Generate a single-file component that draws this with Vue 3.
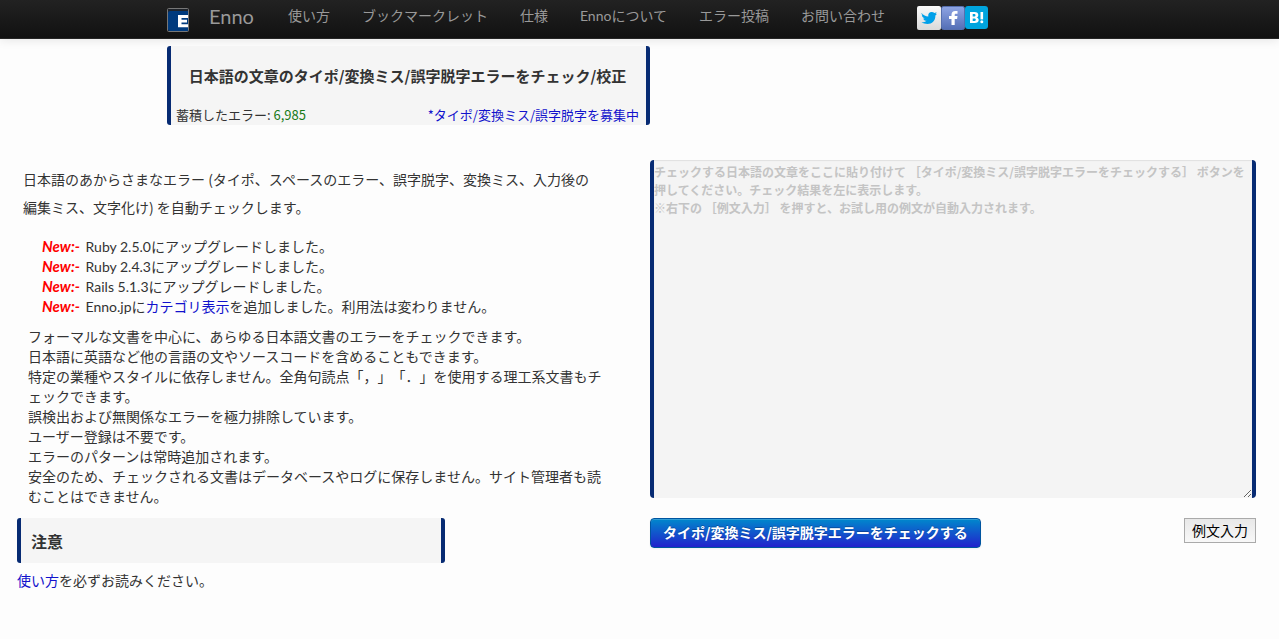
<script setup>
import { ref } from 'vue'

const nav = ['使い方', 'ブックマークレット', '仕様', 'Ennoについて', 'エラー投稿', 'お問い合わせ']
const features = [
  'フォーマルな文書を中心に、あらゆる日本語文書のエラーをチェックできます。',
  '日本語に英語など他の言語の文やソースコードを含めることもできます。',
  '特定の業種やスタイルに依存しません。全角句読点「，」「．」を使用する理工系文書もチェックできます。',
  '誤検出および無関係なエラーを極力排除しています。',
  'ユーザー登録は不要です。',
  'エラーのパターンは常時追加されます。',
  '安全のため、チェックされる文書はデータベースやログに保存しません。サイト管理者も読むことはできません。',
]
const placeholder =
  'チェックする日本語の文章をここに貼り付けて ［タイポ/変換ミス/誤字脱字エラーをチェックする］ ボタンを押してください。チェック結果を左に表示します。\n※右下の ［例文入力］ を押すと、お試し用の例文が自動入力されます。'
const text = ref('')
</script>

<template>
  <div class="page">
    <header class="navbar">
      <nav class="container bar">
        <a class="logo" href="#" aria-label="Enno ホーム">
          <svg width="22" height="24" viewBox="0 0 22 24">
            <rect x=".5" y=".5" width="21" height="23" rx="1" fill="#20242a" stroke="#777" />
            <path d="M1 5q0-2 2-2h18v20H3q-2 0-2-2z" fill="#003a7d" />
            <path d="M11 7h10v3h-6.500v1.800H20v2.700h-5.500v1.800H21v2.900H11z" fill="#fff" />
          </svg>
        </a>
        <a class="brand" href="#">Enno</a>
        <a v-for="item in nav" :key="item" class="item" href="#">{{ item }}</a>
        <div class="social">
          <a href="#" aria-label="Twitter">
            <svg width="24" height="24" viewBox="0 0 24 24">
              <defs><linearGradient id="tw" x2="0" y2="1"><stop stop-color="#fafafa" /><stop offset="1" stop-color="#d9d9d9" /></linearGradient></defs>
              <rect width="24" height="24" rx="2" fill="url(#tw)" />
              <path d="M4.500 7c2 2.300 4 3.400 6.800 3.600C10.800 8 12.300 6 14.700 6c1.100 0 2 .4 2.700 1.100l2.300-.9-1.200 1.900 1.600-.3-1.700 1.700C18.400 15 15 18 10.500 18c-2.200 0-4.300-.6-6-1.700 2 .1 3.600-.4 5-1.500-1.700-.1-2.800-1-3.300-2.400h1.500C5.900 11.800 5 10.700 4.900 9l1.300.3C4.600 8.500 4.300 7.900 4.500 7z" fill="#00a0e9" />
            </svg>
          </a>
          <a href="#" aria-label="Facebook">
            <svg width="24" height="24" viewBox="0 0 24 24">
              <defs><linearGradient id="fb" x2="0" y2="1"><stop stop-color="#8fa5e4" /><stop offset="1" stop-color="#536eb5" /></linearGradient></defs>
              <rect x=".5" y=".5" width="23" height="23" rx="2" fill="url(#fb)" stroke="#566fae" />
              <path d="M10.500 19v-6H8v-3h2.500V8.800C10.500 6.500 11.800 5 14.200 5h2.300v2.800h-1.600c-.9 0-1.200.4-1.200 1.200v1h2.800l-.4 3h-2.400v6z" fill="#fff" />
            </svg>
          </a>
          <a href="#" aria-label="はてなブックマーク">
            <svg width="23" height="24" viewBox="0 0 23 24">
              <rect width="23" height="23" rx="3" fill="#00a4de" />
              <path fill-rule="evenodd" d="M5 6h4.500c2.500 0 3.800 1 3.800 2.900 0 1.300-.7 2.200-1.900 2.500 1.500.3 2.300 1.200 2.300 2.600 0 2-1.500 3-4 3H5zM7.700 8v2.500h1.200c1.100 0 1.600-.4 1.600-1.300S10 8 8.900 8zM7.700 12.500v2.600h1.400c1.100 0 1.700-.4 1.700-1.300s-.6-1.300-1.700-1.300z" fill="#fff" />
              <path d="M15.500 6h2.600v7.400h-2.600z" fill="#fff" /><circle cx="16.800" cy="15.700" r="1.500" fill="#fff" />
            </svg>
          </a>
        </div>
      </nav>
    </header>

    <div class="container">
      <section class="panel hero">
        <h1>日本語の文章のタイポ/変換ミス/誤字脱字エラーをチェック/校正</h1>
        <div class="stats">
          <span>蓄積したエラー: <span class="count">6,985</span></span>
          <a href="#">*タイポ/変換ミス/誤字脱字を募集中</a>
        </div>
      </section>
    </div>

    <main class="columns">
      <section>
        <p class="intro">日本語のあからさまなエラー (タイポ、スペースのエラー、誤字脱字、変換ミス、入力後の編集ミス、文字化け) を自動チェックします。</p>
        <ul class="news">
          <li><em>New:-</em> Ruby 2.5.0にアップグレードしました。</li>
          <li><em>New:-</em> Ruby 2.4.3にアップグレードしました。</li>
          <li><em>New:-</em> Rails 5.1.3にアップグレードしました。</li>
          <li><em>New:-</em> Enno.jpに<a href="#">カテゴリ表示</a>を追加しました。利用法は変わりません。</li>
        </ul>
        <ul class="features">
          <li v-for="f in features" :key="f">{{ f }}</li>
        </ul>
        <div class="panel notice"><h2>注意</h2></div>
        <p class="read"><a href="#">使い方</a>を必ずお読みください。</p>
      </section>
      <form class="editor" @submit.prevent>
        <textarea v-model="text" aria-label="チェックする文章" :placeholder="placeholder"></textarea>
        <div class="actions">
          <button class="check" type="submit">タイポ/変換ミス/誤字脱字エラーをチェックする</button>
          <button class="sample" type="button">例文入力</button>
        </div>
      </form>
    </main>
  </div>
</template>

<style>
body {
  background: #fdfdfd;
}
</style>

<style scoped>
.page {
  font-family: "Noto Sans CJK JP", sans-serif;
  font-size: 14px;
  line-height: 20px;
  color: #333;
  text-spacing-trim: space-all;
}
.page * {
  box-sizing: border-box;
}
a {
  color: #1111cc;
  text-decoration: none;
}
h1, h2, p, ul {
  margin: 0;
  padding: 0;
}
ul {
  list-style: none;
}
.navbar {
  height: 39px;
  background: linear-gradient(#222, #111);
  border-bottom: 1px solid #252525;
  box-shadow: 0 1px 10px rgba(0, 0, 0, 0.1);
}
.container {
  max-width: 945px;
  margin: 0 auto;
}
.bar {
  display: flex;
  align-items: center;
  height: 32px;
  font-family: Lato, "Noto Sans CJK JP", sans-serif;
  white-space: nowrap;
}
.bar a {
  color: #999;
}
.logo {
  height: 24px;
  margin: 8px 20px 0 0;
}
.brand {
  font-size: 20px;
  margin-right: 34px;
}
.item {
  margin-right: 32px;
}
.social {
  display: flex;
  height: 24px;
  margin-top: 4px;
}
.social svg, .logo svg {
  display: block;
}
.panel {
  background: #f5f5f5;
  border: 0 solid #072b73;
  border-width: 0 4px;
  border-radius: 3px;
}
.hero {
  width: 483px;
  margin-top: 7px;
  padding: 20px 7px 0 5px;
}
h1 {
  font-size: 15px;
  line-height: 20px;
  text-align: center;
  white-space: nowrap;
}
.stats {
  display: flex;
  justify-content: space-between;
  margin-top: 19px;
  font-size: 13px;
}
.count {
  color: #187a18;
}
.columns {
  display: grid;
  grid-template-columns: minmax(0, 633fr) minmax(0, 606fr);
  padding: 35px 23px 48px 17px;
}
.intro {
  padding: 5px 52px 0 6px;
  line-height: 28px;
}
.news {
  margin-top: 16px;
  padding-left: 25px;
  font-family: Lato, "Noto Sans CJK JP", sans-serif;
}
em {
  margin-right: 2px;
  font-size: 15px;
  font-weight: 700;
  line-height: 16px;
  color: #f00;
}
.features {
  margin-top: 9px;
  padding: 0 40px 0 11px;
}
.notice {
  max-width: 428px;
  margin-top: 12px;
  padding: 13px 10px 12px;
}
h2 {
  font-size: 16px;
  line-height: 20px;
}
.read {
  margin-top: 7px;
}
textarea {
  display: block;
  width: 100%;
  height: 338px;
  padding: 3px 0;
  background: #f4f4f4;
  border: 0 solid #072b73;
  border-width: 0 4px;
  border-radius: 4px;
  box-shadow: inset 0 1px 1px rgba(0, 0, 0, 0.08);
  font: 700 12px/18px "Noto Sans CJK JP", sans-serif;
  color: #333;
  resize: vertical;
}
textarea::placeholder {
  color: #c4c4c4;
  opacity: 1;
}
.actions {
  display: flex;
  justify-content: space-between;
  align-items: flex-start;
  margin-top: 20px;
}
button {
  font: 14px/20px "Noto Sans CJK JP", sans-serif;
  white-space: nowrap;
  cursor: pointer;
}
.check {
  padding: 3px 12px 5px;
  color: #fff;
  font-weight: 700;
  text-shadow: 0 -1px 0 rgba(0, 0, 0, 0.25);
  background: linear-gradient(#0088cc, #2222cc);
  border: 1px solid #0055a0;
  border-radius: 4px;
  box-shadow: inset 0 1px 0 rgba(255, 255, 255, 0.2), 0 1px 2px rgba(0, 0, 0, 0.05);
}
.sample {
  padding: 1px 7px 2px;
  color: #000;
  background: linear-gradient(#e8e8e8, #f8f8f8);
  border: 1px solid #aaa;
  border-radius: 0;
}
</style>
